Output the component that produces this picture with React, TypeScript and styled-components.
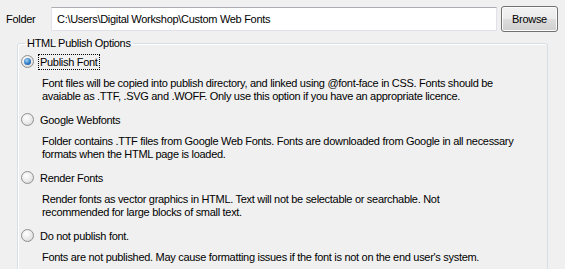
import styled, { createGlobalStyle } from 'styled-components';

const GlobalStyle = createGlobalStyle`
  html, body {
    margin: 0;
    padding: 0;
    background: #f0f0f0;
  }
  body {
    font-family: 'Liberation Sans', Arial, sans-serif;
    font-size: 11px;
    letter-spacing: -0.3px;
    color: #000;
  }
`;

const Dialog = styled.div`
  width: 565px;
  height: 269px;
  overflow: hidden;
  background: #f0f0f0;
`;

const FolderRow = styled.div`
  display: flex;
  align-items: center;
  height: 26px;
  padding: 6px 0 0 6px;
`;

const Label = styled.span`
  width: 45px;
  line-height: 13px;
`;

const PathInput = styled.div`
  box-sizing: border-box;
  width: 446px;
  height: 24px;
  padding: 0 0 0 5px;
  display: flex;
  align-items: center;
  background: #fff;
  border: 1px solid #dfe2e7;
  border-top-color: #abadb3;
  border-left-color: #e2e3ea;
  line-height: 13px;
`;

const Button = styled.div`
  box-sizing: border-box;
  margin-left: 4px;
  width: 57px;
  height: 26px;
  display: flex;
  align-items: center;
  justify-content: center;
  border: 1px solid #707070;
  border-radius: 3px;
  background: linear-gradient(#f2f2f2 0%, #ebebeb 50%, #dddddd 51%, #cfcfcf 100%);
  box-shadow: inset 0 0 0 1px #fcfcfc;
`;

const Group = styled.fieldset`
  box-sizing: border-box;
  margin: 4px 0 0 17px;
  width: 531px;
  height: 260px;
  padding: 0 0 0 3px;
  border: 1px solid #d5dfe5;
  border-radius: 3px;
  box-shadow: 1px 1px 0 #fff inset;
`;

const Legend = styled.legend`
  margin-left: 4px;
  padding: 0 2px;
  line-height: 15px;
`;

const Option = styled.div<{ $first?: boolean }>`
  display: flex;
  flex-direction: column;
  padding-top: ${({ $first }) => ($first ? '3px' : '9px')};
`;

const OptionRow = styled.div`
  display: flex;
  align-items: center;
  height: 15px;
`;

const Radio = styled.span<{ $checked?: boolean }>`
  position: relative;
  box-sizing: border-box;
  width: 13px;
  height: 13px;
  border-radius: 50%;
  border: 1px solid #8f8f8f;
  background: radial-gradient(circle at 40% 35%, #ffffff 0%, #e9e9e9 55%, #cfcfcf 100%);

  &::after {
    content: '';
    display: ${({ $checked }) => ($checked ? 'block' : 'none')};
    position: absolute;
    left: 2px;
    top: 2px;
    width: 7px;
    height: 7px;
    border-radius: 50%;
    background: radial-gradient(circle at 40% 35%, #a5d7f5 0%, #2d79c2 55%, #1c4f86 100%);
  }
`;

const OptionLabel = styled.span<{ $focused?: boolean }>`
  margin-left: 5px;
  padding: 1px 1px 0;
  line-height: 13px;
  outline: ${({ $focused }) => ($focused ? '1px dotted #000' : 'none')};
`;

const Description = styled.div`
  padding: 8px 0 0 21px;
  line-height: 13px;
  white-space: nowrap;
`;

const options = [
  {
    label: 'Publish Font',
    checked: true,
    lines: [
      'Font files will be copied into publish directory, and linked using @font-face in CSS. Fonts should be',
      'avaiable as .TTF, .SVG and .WOFF. Only use this option if you have an appropriate licence.',
    ],
  },
  {
    label: 'Google Webfonts',
    lines: [
      'Folder contains .TTF files from Google Web Fonts. Fonts are downloaded from Google in all necessary',
      'formats when the HTML page is loaded.',
    ],
  },
  {
    label: 'Render Fonts',
    lines: [
      'Render fonts as vector graphics in HTML. Text will not be selectable or searchable. Not',
      'recommended for large blocks of small text.',
    ],
  },
  {
    label: 'Do not publish font.',
    lines: ["Fonts are not published. May cause formatting issues if the font is not on the end user's system."],
  },
];

const App = () => {
  return (
    <Dialog>
      <GlobalStyle />
      <FolderRow>
        <Label>Folder</Label>
        <PathInput>C:\Users\Digital Workshop\Custom Web Fonts</PathInput>
        <Button>Browse</Button>
      </FolderRow>
      <Group>
        <Legend>HTML Publish Options</Legend>
        {options.map((opt, i) => (
          <Option key={opt.label} $first={i === 0}>
            <OptionRow>
              <Radio $checked={opt.checked} />
              <OptionLabel $focused={opt.checked}>{opt.label}</OptionLabel>
            </OptionRow>
            <Description>
              {opt.lines.map((line) => (
                <div key={line}>{line}</div>
              ))}
            </Description>
          </Option>
        ))}
      </Group>
    </Dialog>
  );
};

export default App;
